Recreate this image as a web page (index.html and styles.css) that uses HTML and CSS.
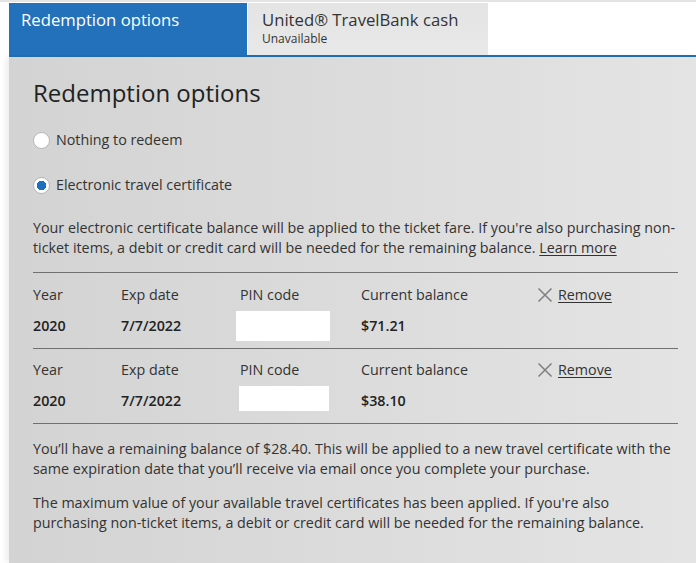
FILE: index.html
```html
<!DOCTYPE html>
<html>
<head>
<meta charset="utf-8">
<link rel="stylesheet" href="styles.css">
</head>
<body>
<div class="page">
  <div class="tabs">
    <div class="tab tab-active">Redemption options</div>
    <div class="tab tab-off">
      <div class="tab-title">United® TravelBank cash</div>
      <div class="tab-sub">Unavailable</div>
    </div>
  </div>
  <div class="panel">
    <h1 class="heading">Redemption options</h1>
    <label class="radio-row"><span class="radio"></span>Nothing to redeem</label>
    <label class="radio-row radio-row2"><span class="radio radio-on"></span>Electronic travel certificate</label>
    <p class="text intro">Your electronic certificate balance will be applied to the ticket fare. If you're also purchasing non-ticket items, a debit or credit card will be needed for the remaining balance. <a class="link">Learn more</a></p>
    <div class="cert">
      <div class="cells labels">
        <span>Year</span><span>Exp date</span><span>PIN code</span><span>Current balance</span>
        <span class="remove"><svg class="x" viewBox="0 0 16 16" width="16" height="16"><path d="M1.5 1.5L14.5 14.5M14.5 1.5L1.5 14.5" stroke="#7f7f7f" stroke-width="1.5" fill="none"/></svg><a class="link">Remove</a></span>
      </div>
      <div class="cells values">
        <span class="val">2020</span><span class="val">7/7/2022</span><span><span class="pin pin1"></span></span><span class="val">$71.21</span><span></span>
      </div>
    </div>
    <div class="cert">
      <div class="cells labels">
        <span>Year</span><span>Exp date</span><span>PIN code</span><span>Current balance</span>
        <span class="remove"><svg class="x" viewBox="0 0 16 16" width="16" height="16"><path d="M1.5 1.5L14.5 14.5M14.5 1.5L1.5 14.5" stroke="#7f7f7f" stroke-width="1.5" fill="none"/></svg><a class="link">Remove</a></span>
      </div>
      <div class="cells values">
        <span class="val">2020</span><span class="val">7/7/2022</span><span><span class="pin pin2"></span></span><span class="val">$38.10</span><span></span>
      </div>
    </div>
    <div class="rule"></div>
    <p class="text after">You’ll have a remaining balance of $28.40. This will be applied to a new travel certificate with the same expiration date that you’ll receive via email once you complete your purchase.</p>
    <p class="text after2">The maximum value of your available travel certificates has been applied. If you're also purchasing non-ticket items, a debit or credit card will be needed for the remaining balance.</p>
  </div>
</div>
</body>
</html>
```
FILE: styles.css
```css
* { box-sizing: border-box; }
html, body { margin: 0; padding: 0; background: #fff; }
body {
  font-family: "Open Sans", "Noto Sans", sans-serif;
  color: #333;
  width: 696px;
  height: 563px;
  overflow: hidden;
}
.page {
  border-top: 2px solid #e4e4e4;
  padding: 1px 0 0 9px;
  height: 563px;
}
.tabs {
  display: flex;
  height: 54px;
  border-bottom: 2px solid #2170b8;
}
.tab { height: 52px; }
.tab-active {
  width: 238px;
  background: #2271ba;
  color: #fff;
  font-size: 16.7px;
  line-height: 24px;
  padding: 5px 0 0 12px;
}
.tab-off {
  width: 240px;
  margin-left: 1px;
  background: linear-gradient(to bottom, #e4e4e4, #e8e8e8);
  padding: 5px 0 0 14px;
}
.tab-title { font-size: 16.7px; line-height: 23px; color: #333; }
.tab-sub { font-size: 12px; line-height: 15px; color: #333; }
.panel {
  height: 506px;
  background: linear-gradient(to right, #d3d3d3, #e4e4e4);
  padding: 0 18px 0 24px;
  box-shadow: -3px 0 6px rgba(0,0,0,0.08);
}
.heading {
  margin: 0;
  padding-top: 20px;
  font-size: 24px;
  font-weight: 400;
  line-height: 32px;
  color: #222;
}
.radio-row {
  display: flex;
  align-items: center;
  font-size: 14.3px;
  line-height: 20px;
  margin-top: 21px;
  gap: 6px;
}
.radio-row2 { margin-top: 25px; }
.radio {
  width: 17px;
  height: 17px;
  border-radius: 50%;
  background: #fff;
  border: 1px solid #b5b5b5;
  flex: none;
}
.radio-on {
  background: radial-gradient(circle, #1f6fc0 0 4.5px, #fff 5px);
}
.text {
  font-size: 14.3px;
  line-height: 20px;
  margin: 0;
}
.intro { margin-top: 23px; padding-bottom: 14px; }
.link { text-decoration: underline; color: #333; text-underline-offset: 2px; }
.cert {
  border-top: 1px solid #707070;
  padding-top: 12px;
  height: 76px;
}
.cert + .cert { padding-top: 11px; height: 75px; }
.cells {
  display: grid;
  grid-template-columns: 88px 119px 121px 176px 1fr;
  font-size: 14.3px;
}
.labels { line-height: 20px; }
.values { margin-top: 6px; line-height: 30px; align-items: start; }
.val { font-weight: 600; color: #222; }
.remove { display: flex; align-items: center; gap: 5px; }
.x { display: block; }
.pin { display: block; background: #fff; }
.pin1 { width: 94px; height: 30px; margin-left: -4px; }
.pin2 { width: 90px; height: 25px; margin-left: -1px; }
.rule { border-top: 1px solid #707070; }
.after { margin-top: 15px; }
.after2 { margin-top: 14px; }
```
